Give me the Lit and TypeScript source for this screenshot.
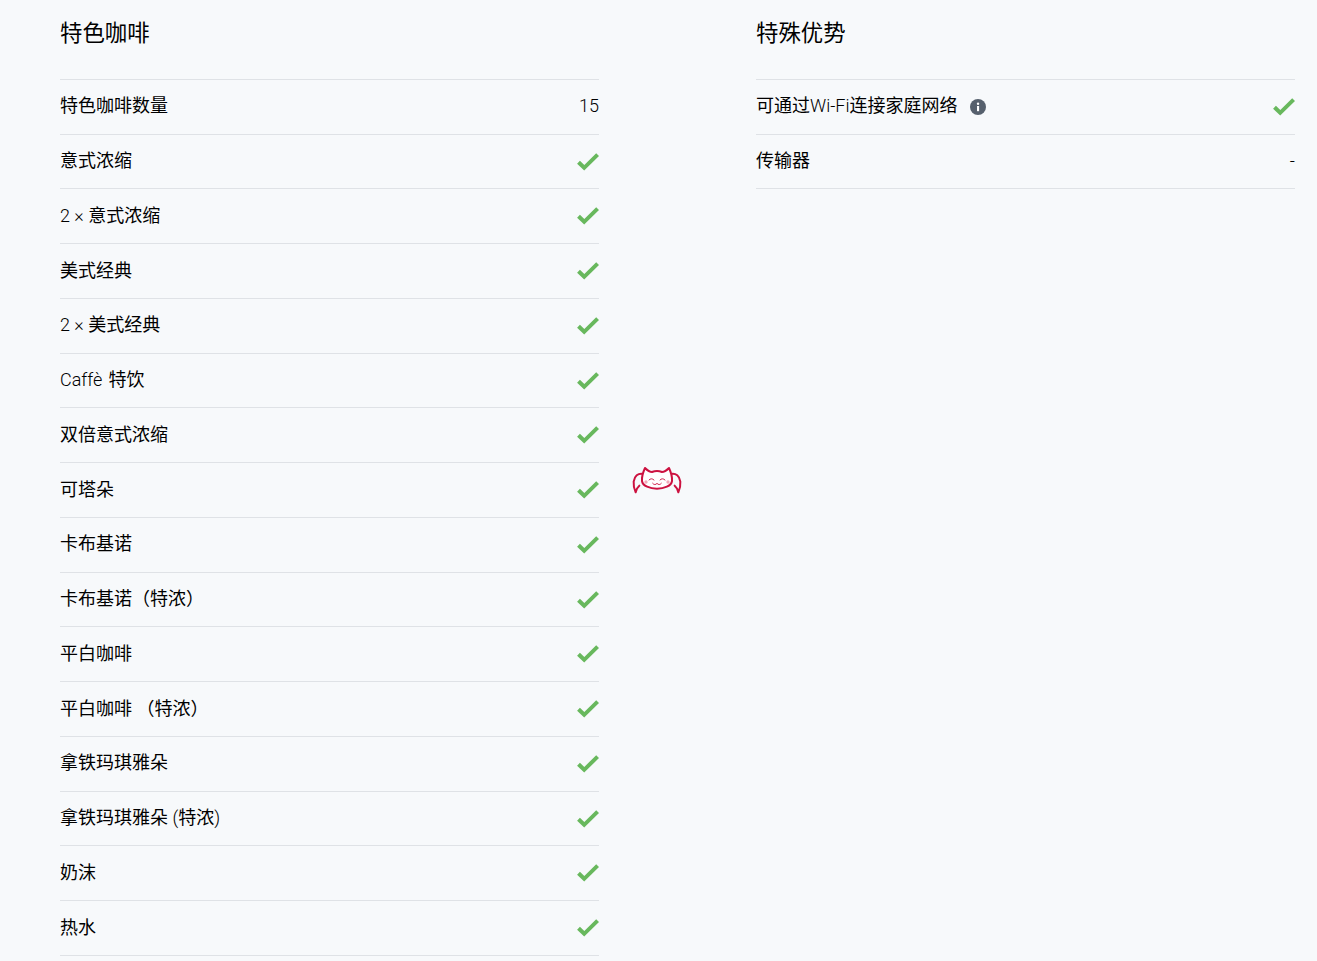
import { LitElement, html, css, svg } from "lit";
import { customElement } from "lit/decorators.js";

type Row = { label: string; value?: string; info?: boolean };

const coffee: Row[] = [
  { label: "特色咖啡数量", value: "15" },
  { label: "意式浓缩" },
  { label: "2 × 意式浓缩" },
  { label: "美式经典" },
  { label: "2 × 美式经典" },
  { label: "Caffè \u200a特饮" },
  { label: "双倍意式浓缩" },
  { label: "可塔朵" },
  { label: "卡布基诺" },
  { label: "卡布基诺（特浓）" },
  { label: "平白咖啡" },
  { label: "平白咖啡 （特浓）" },
  { label: "拿铁玛琪雅朵" },
  { label: "拿铁玛琪雅朵 (特浓)" },
  { label: "奶沫" },
  { label: "热水" },
];

const extras: Row[] = [
  { label: "可通过Wi-Fi连接家庭网络", info: true },
  { label: "传输器", value: "-" },
];

const check = svg`<svg class="check" viewBox="0 0 22 18" width="22" height="18" aria-hidden="true"><path d="M1.5 9.2 L7.2 14.8 L20.6 1.6" fill="none" stroke="#68b85d" stroke-width="4"/></svg>`;

const info = svg`<svg class="info" viewBox="0 0 16 16" width="16" height="16" aria-hidden="true"><circle cx="8" cy="8" r="8" fill="#56606d"/><rect x="7" y="7" width="2.1" height="5.2" fill="#fff"/><circle cx="8.05" cy="4.8" r="1.2" fill="#fff"/></svg>`;

const cat = svg`<svg viewBox="0 0 225 150" width="75" height="50" fill="none" stroke="#cc1240" stroke-width="6" stroke-linecap="round" stroke-linejoin="round" aria-hidden="true">
  <path d="M70 57 C54 53 43 64 41 80 C40 92 43 103 47 112 C48 104 51 98 58 92"/>
  <path d="M152 57 C168 53 179 64 181 80 C182 92 179 103 175 112 C174 104 171 98 164 92"/>
  <path d="M75 39 C82 46 89 51 96 51 C105 47 117 47 126 51 C133 51 140 46 147 39 C153 52 157 66 156 78 C154 93 132 101 111 101 C90 101 68 93 66 78 C65 66 69 52 75 39 Z" fill="#fff"/>
  <path d="M87 75 C91 70 97 70 102 75 M120 75 C124 70 130 70 135 75" stroke-width="2.8"/>
  <path d="M98 85 C102 90 107 90 111 85 C115 90 120 90 124 85" stroke-width="2.8"/>
  <circle cx="78" cy="81" r="5" fill="#f2a9ba" stroke="none"/>
  <circle cx="144" cy="81" r="5" fill="#f2a9ba" stroke="none"/>
</svg>`;

function splitLatin(label: string) {
  return label
    .split(/([\x20-\x7e×è\u200a]+)/)
    .filter(Boolean)
    .map((part) =>
      /^[\x20-\x7e×è\u200a]+$/.test(part)
        ? html`<span class="latin">${part}</span>`
        : part
    );
}

@customElement("app-root")
export class AppRoot extends LitElement {
  static styles = css`
    :host {
      display: block;
      height: 961px;
      overflow: hidden;
      position: relative;
      background: #f7f9fb;
      color: #000;
      font-family: "Noto Sans CJK SC", "Liberation Sans", sans-serif;
    }
    .columns {
      display: grid;
      grid-template-columns: 539px 539px;
      column-gap: 157px;
      padding-left: 60px;
    }
    h2 {
      margin: 0;
      height: 78.9px;
      box-sizing: border-box;
      padding-top: 15px;
      font-size: 22.4px;
      line-height: 32px;
      font-weight: 400;
    }
    .list {
      border-top: 1px solid #dfe2e6;
    }
    .row {
      display: flex;
      align-items: center;
      justify-content: space-between;
      box-sizing: border-box;
      height: 54.75px;
      border-bottom: 1px solid #dfe2e6;
      font-size: 18px;
    }
    .label {
      display: flex;
      align-items: center;
      gap: 12px;
    }
    .text {
      white-space: pre;
      padding-bottom: 5px;
    }
    .latin {
      font-family: Roboto, "Liberation Sans", sans-serif;
      font-weight: 300;
    }
    .value {
      font-family: Roboto, "Liberation Sans", sans-serif;
      font-weight: 300;
      font-size: 18px;
      color: #000;
      padding-bottom: 2px;
    }
    svg {
      display: block;
    }
    .mascot {
      position: absolute;
      left: 620px;
      top: 455px;
    }
  `;

  private renderRow(r: Row) {
    return html`<div class="row">
      <span class="label"
        ><span class="text">${splitLatin(r.label)}</span>${r.info ? info : ""}</span
      >
      ${r.value ? html`<span class="value">${r.value}</span>` : check}
    </div>`;
  }

  render() {
    return html`<div class="columns">
        <section>
          <h2>特色咖啡</h2>
          <div class="list">${coffee.map((r) => this.renderRow(r))}</div>
        </section>
        <section>
          <h2>特殊优势</h2>
          <div class="list">${extras.map((r) => this.renderRow(r))}</div>
        </section>
      </div>
      <div class="mascot">${cat}</div>`;
  }
}
